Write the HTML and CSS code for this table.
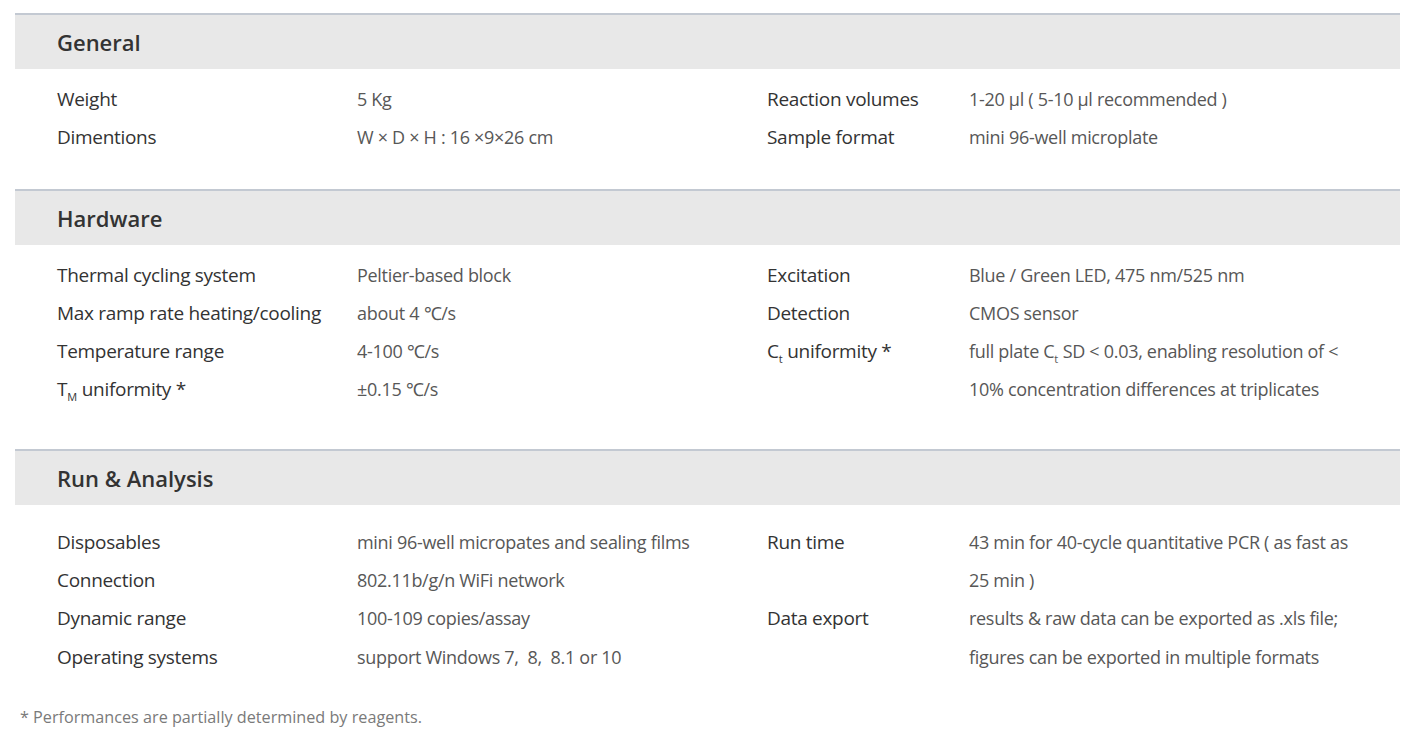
FILE: index.html
```html
<!DOCTYPE html>
<html>
<head>
<meta charset="utf-8">
<link rel="stylesheet" href="styles.css">
</head>
<body>
<div class="page">
  <section class="spec spec-general">
    <h2 class="band">General</h2>
    <div class="cols">
      <dl class="pairs pairs-left">
        <dt>Weight</dt><dd>5 Kg</dd>
        <dt>Dimentions</dt><dd>W × D × H : 16 ×9×26 cm</dd>
      </dl>
      <dl class="pairs pairs-right">
        <dt>Reaction volumes</dt><dd>1-20 μl ( 5-10 μl recommended )</dd>
        <dt>Sample format</dt><dd>mini 96-well microplate</dd>
      </dl>
    </div>
  </section>
  <section class="spec spec-hardware">
    <h2 class="band">Hardware</h2>
    <div class="cols">
      <dl class="pairs pairs-left">
        <dt>Thermal cycling system</dt><dd>Peltier-based block</dd>
        <dt>Max ramp rate heating/cooling</dt><dd>about 4 ℃/s</dd>
        <dt>Temperature range</dt><dd>4-100 ℃/s</dd>
        <dt>T<sub>M</sub> uniformity *</dt><dd>±0.15 ℃/s</dd>
      </dl>
      <dl class="pairs pairs-right">
        <dt>Excitation</dt><dd>Blue / Green LED, 475 nm/525 nm</dd>
        <dt>Detection</dt><dd>CMOS sensor</dd>
        <dt>C<sub>t</sub> uniformity *</dt><dd>full plate C<sub>t</sub> SD &lt; 0.03, enabling resolution of &lt;<br>10% concentration differences at triplicates</dd>
      </dl>
    </div>
  </section>
  <section class="spec spec-run">
    <h2 class="band">Run &amp; Analysis</h2>
    <div class="cols">
      <dl class="pairs pairs-left">
        <dt>Disposables</dt><dd>mini 96-well micropates and sealing films</dd>
        <dt>Connection</dt><dd>802.11b/g/n WiFi network</dd>
        <dt>Dynamic range</dt><dd>100-109 copies/assay</dd>
        <dt>Operating systems</dt><dd>support Windows 7,&nbsp; 8,&nbsp; 8.1 or 10</dd>
      </dl>
      <dl class="pairs pairs-right">
        <dt>Run time</dt><dd>43 min for 40-cycle quantitative PCR ( as fast as<br>25 min )</dd>
        <dt>Data export</dt><dd>results &amp; raw data can be exported as .xls file;<br>figures can be exported in multiple formats</dd>
      </dl>
    </div>
  </section>
  <p class="footnote">* Performances are partially determined by reagents.</p>
</div>
</body>
</html>
```
FILE: styles.css
```css
html, body {
  margin: 0;
  padding: 0;
  background: #ffffff;
}
.page {
  font-family: "Open Sans", "Liberation Sans", sans-serif;
  padding: 13px 15px 0 15px;
  color: #3c3c3c;
}
.spec {
  display: flex;
  flex-direction: column;
}
.band {
  margin: 0;
  height: 54px;
  line-height: 54px;
  background: #e8e8e8;
  border-top: 2px solid #c3c9d2;
  padding-left: 42px;
  font-size: 22px;
  font-weight: 600;
  color: #333333;
}
.cols {
  display: flex;
  padding-left: 42px;
}
.spec-general .cols { padding-top: 11px; padding-bottom: 32px; }
.spec-hardware .cols { padding-top: 11px; padding-bottom: 40px; }
.spec-run .cols { padding-top: 18px; padding-bottom: 21px; }
.pairs {
  margin: 0;
  display: grid;
  align-content: start;
  font-size: 18px;
  line-height: 38.3px;
  letter-spacing: -0.3px;
}
.pairs-left {
  grid-template-columns: 300px 410px;
}
.pairs-right {
  grid-template-columns: 202px 1fr;
}
.pairs dt {
  color: #333333;
  font-size: 19px;
  font-weight: 400;
}
.pairs dd {
  margin: 0;
  color: #575757;
  font-weight: 400;
}
sub {
  font-size: 11px;
  vertical-align: -5px;
  line-height: 0;
  letter-spacing: 0;
}
.footnote {
  margin: 0;
  padding-left: 5px;
  font-size: 16.2px;
  line-height: 40px;
  color: #7a7a7a;
}
```
